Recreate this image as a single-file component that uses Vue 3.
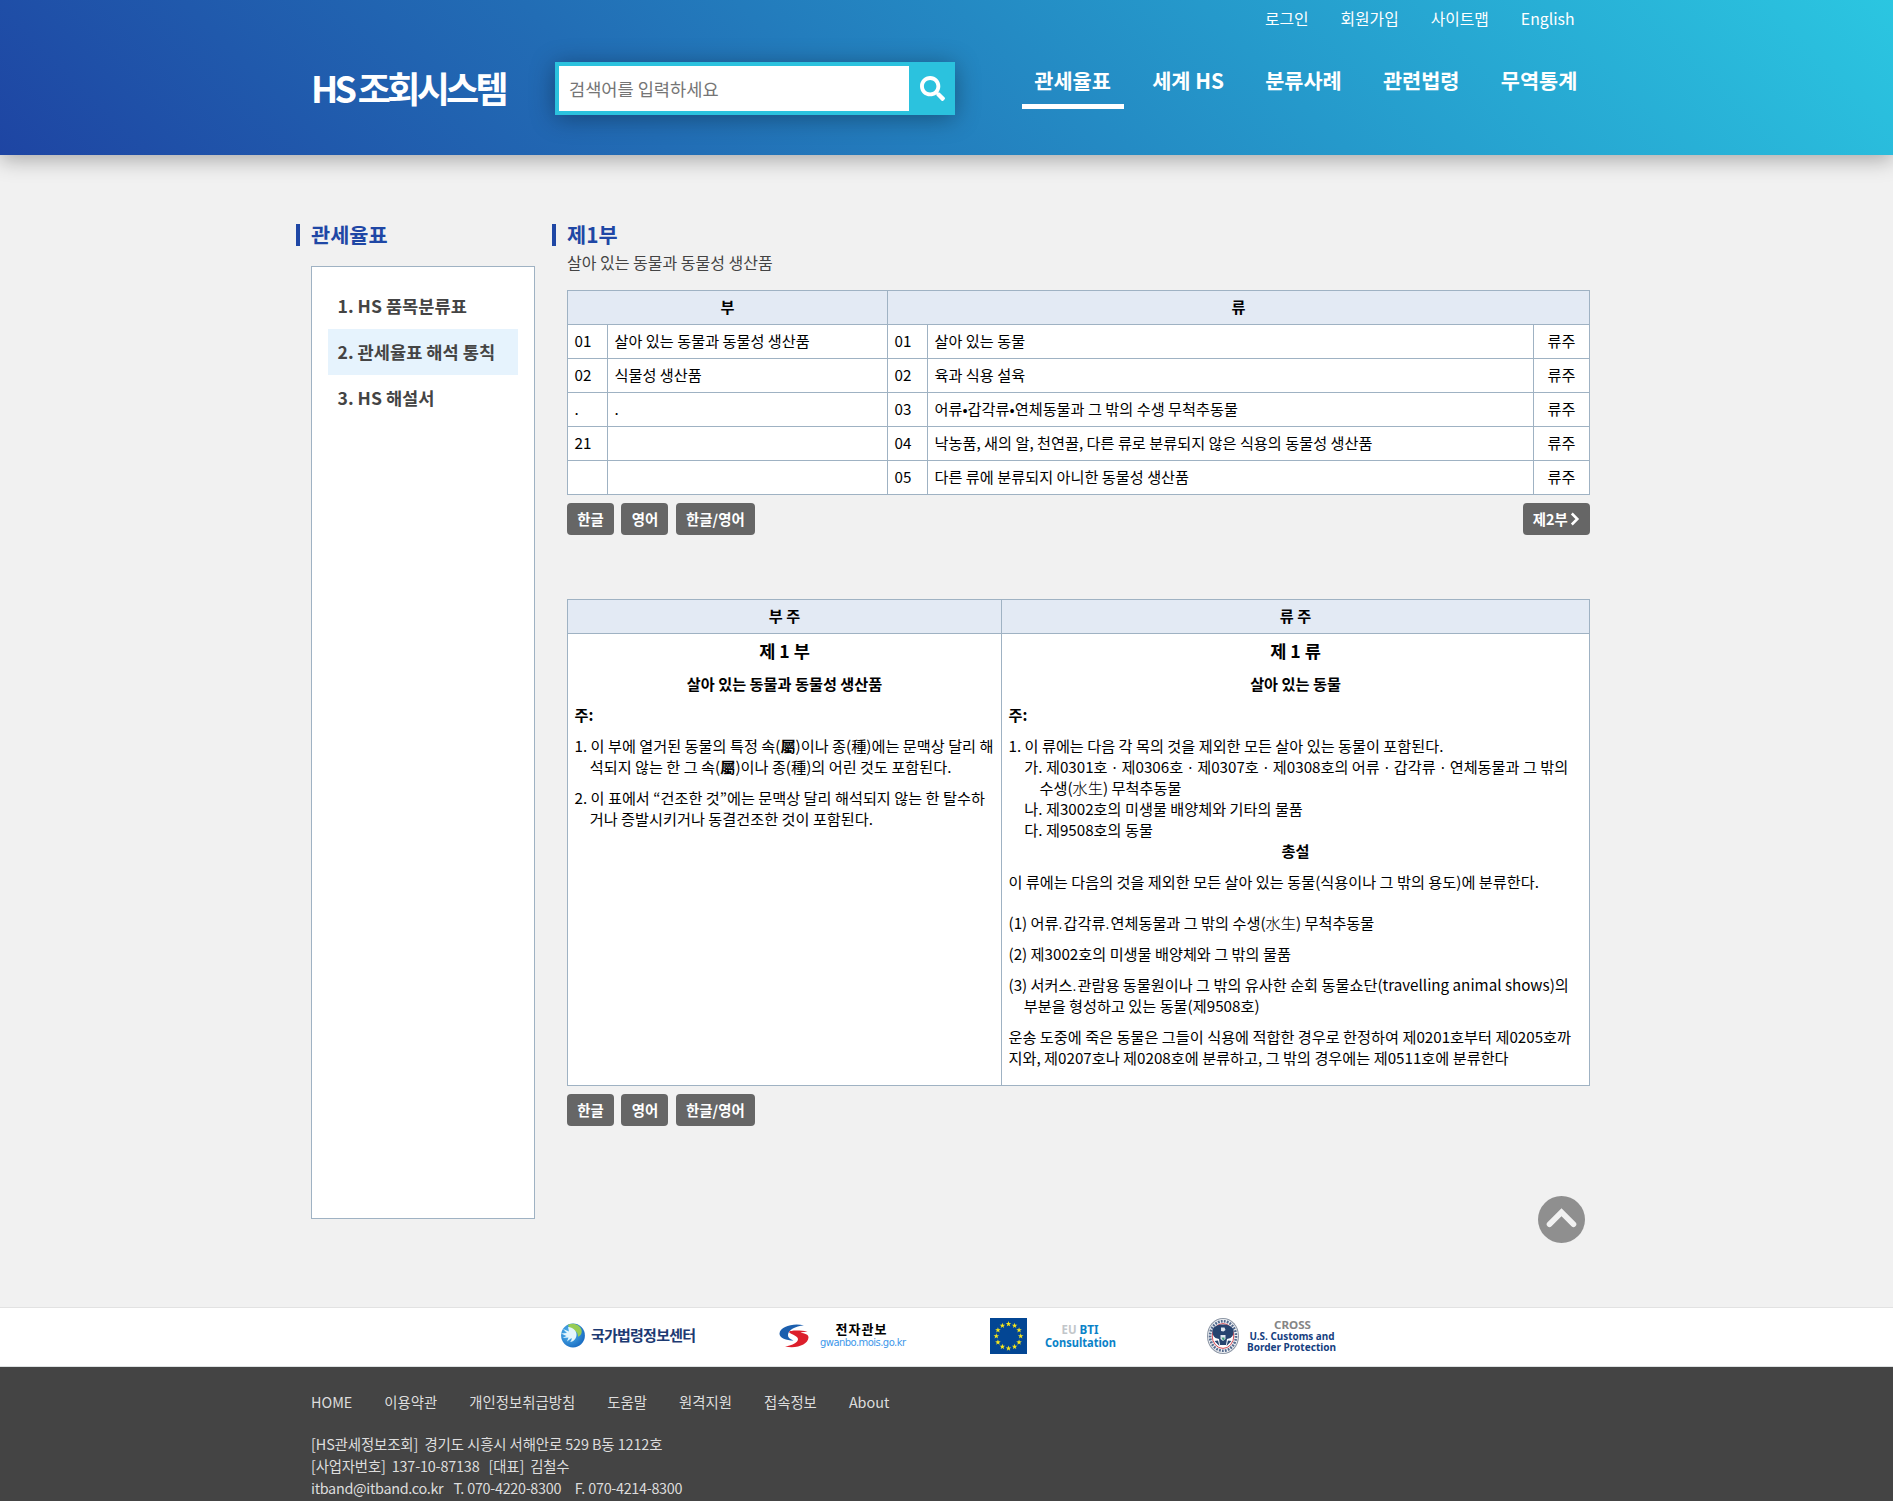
<script setup>
const topLinks = ['로그인', '회원가입', '사이트맵', 'English']
const mainNav = ['관세율표', '세계 HS', '분류사례', '관련법령', '무역통계']
const sideMenu = ['1. HS 품목분류표', '2. 관세율표 해석 통칙', '3. HS 해설서']
const rows = [
  ['01', '살아 있는 동물과 동물성 생산품', '01', '살아 있는 동물'],
  ['02', '식물성 생산품', '02', '육과 식용 설육'],
  ['.', '.', '03', '어류•갑각류•연체동물과 그 밖의 수생 무척추동물'],
  ['21', '', '04', '낙농품, 새의 알, 천연꿀, 다른 류로 분류되지 않은 식용의 동물성 생산품'],
  ['', '', '05', '다른 류에 분류되지 아니한 동물성 생산품'],
]
const languages = ['한글', '영어', '한글/영어']
const footerLinks = ['HOME', '이용약관', '개인정보취급방침', '도움말', '원격지원', '접속정보', 'About']

const starPoints = (cx, cy, r) =>
  Array.from({ length: 10 }, (_, i) => {
    const a = (i * Math.PI) / 5 - Math.PI / 2
    const q = i % 2 ? r * 0.4 : r
    return `${(cx + q * Math.cos(a)).toFixed(2)},${(cy + q * Math.sin(a)).toFixed(2)}`
  }).join(' ')
const stars = Array.from({ length: 12 }, (_, i) => {
  const a = (i * Math.PI) / 6
  return starPoints(23.5 + 12.2 * Math.sin(a), 25.2 - 12.2 * Math.cos(a), 2.9)
})
</script>

<template>
  <div class="page">
    <header class="header">
      <div class="header-inner">
        <a class="logo">HS 조회시스템</a>
        <form class="search">
          <input class="search-input" type="text" placeholder="검색어를 입력하세요" />
          <button class="search-button" type="button" aria-label="검색">
            <svg width="25" height="25" viewBox="0 0 512 512">
              <path fill="#fff" d="M505 442.700 405.300 343c-4.500-4.500-10.600-7-17-7H372c27.600-35.300 44-79.700 44-128C416 93.100 322.900 0 208 0S0 93.100 0 208s93.100 208 208 208c48.300 0 92.700-16.400 128-44v16.300c0 6.400 2.500 12.500 7 17l99.700 99.700c9.400 9.400 24.600 9.400 33.900 0l28.300-28.300c9.400-9.400 9.400-24.600.1-34zM208 336c-70.700 0-128-57.200-128-128 0-70.700 57.200-128 128-128 70.700 0 128 57.200 128 128 0 70.700-57.200 128-128 128z" />
            </svg>
          </button>
        </form>
        <div class="header-right">
          <nav class="top-links">
            <a v-for="link in topLinks" :key="link">{{ link }}</a>
          </nav>
          <nav class="main-nav">
            <a v-for="(item, i) in mainNav" :key="item" :class="{ active: i === 0 }">{{ item }}</a>
          </nav>
        </div>
      </div>
    </header>

    <div class="body">
      <aside class="side">
        <h2 class="title">관세율표</h2>
        <ul class="side-menu">
          <li v-for="(item, i) in sideMenu" :key="item" :class="{ current: i === 1 }">{{ item }}</li>
        </ul>
      </aside>

      <main class="main">
        <h2 class="title">제1부</h2>
        <p class="subtitle">살아 있는 동물과 동물성 생산품</p>

        <table class="grid index">
          <colgroup>
            <col class="c-no" /><col class="c-section" /><col class="c-no" /><col class="c-chapter" /><col class="c-note" />
          </colgroup>
          <thead>
            <tr><th colspan="2">부</th><th colspan="3">류</th></tr>
          </thead>
          <tbody>
            <tr v-for="(row, i) in rows" :key="i">
              <td v-for="(cell, j) in row" :key="j">{{ cell }}</td>
              <td class="center">류주</td>
            </tr>
          </tbody>
        </table>
        <div class="buttons">
          <button v-for="lang in languages" :key="lang" type="button">{{ lang }}</button>
          <button class="next" type="button">제2부<svg width="10" height="14" viewBox="0 0 10 14"><path d="M1.800 1.500 7.300 7 1.800 12.500" fill="none" stroke="#fff" stroke-width="2.600" /></svg></button>
        </div>

        <table class="grid notes">
          <colgroup><col class="n-left" /><col class="n-right" /></colgroup>
          <thead>
            <tr><th>부 주</th><th>류 주</th></tr>
          </thead>
          <tbody>
            <tr>
              <td>
                <h3>제 1 부</h3>
                <h4>살아 있는 동물과 동물성 생산품</h4>
                <p><b>주:</b></p>
                <p class="hang">1. 이 부에 열거된 동물의 특정 속(<b>屬</b>)이나 종(種)에는 문맥상 달리 해<br />석되지 않는 한 그 속(<b>屬</b>)이나 종(種)의 어린 것도 포함된다.</p>
                <p class="hang">2. 이 표에서 “건조한 것”에는 문맥상 달리 해석되지 않는 한 탈수하<br />거나 증발시키거나 동결건조한 것이 포함된다.</p>
              </td>
              <td>
                <h3>제 1 류</h3>
                <h4>살아 있는 동물</h4>
                <p><b>주:</b></p>
                <p class="tight">1. 이 류에는 다음 각 목의 것을 제외한 모든 살아 있는 동물이 포함된다.</p>
                <p class="tight sub">가. 제0301호ㆍ제0306호ㆍ제0307호ㆍ제0308호의 어류ㆍ갑각류ㆍ연체동물과 그 밖의<br />수생(<span class="thin">水生</span>) 무척추동물</p>
                <p class="tight sub">나. 제3002호의 미생물 배양체와 기타의 물품</p>
                <p class="tight sub">다. 제9508호의 동물</p>
                <h4>총설</h4>
                <p class="lead">이 류에는 다음의 것을 제외한 모든 살아 있는 동물(식용이나 그 밖의 용도)에 분류한다.</p>
                <p>(1) 어류<span class="thin dot">.</span>갑각류<span class="thin dot">.</span>연체동물과 그 밖의 수생(<span class="thin">水生</span>) 무척추동물</p>
                <p>(2) 제3002호의 미생물 배양체와 그 밖의 물품</p>
                <p class="hang">(3) 서커스<span class="thin dot">.</span>관람용 동물원이나 그 밖의 유사한 순회 동물쇼단(travelling animal shows)의<br />부분을 형성하고 있는 동물(제9508호)</p>
                <p>운송 도중에 죽은 동물은 그들이 식용에 적합한 경우로 한정하여 제0201호부터 제0205호까<br />지와, 제0207호나 제0208호에 분류하고, 그 밖의 경우에는 제0511호에 분류한다</p>
              </td>
            </tr>
          </tbody>
        </table>
        <div class="buttons">
          <button v-for="lang in languages" :key="lang" type="button">{{ lang }}</button>
        </div>

        <a class="to-top" aria-label="맨 위로">
          <svg width="47" height="47" viewBox="0 0 47 47">
            <circle cx="23.500" cy="23.500" r="23.500" fill="#8f8f8f" />
            <path d="M11.500 28.200 23.500 16.200 35.500 28.200" fill="none" stroke="#f1f1f1" stroke-width="5.600" stroke-linecap="round" stroke-linejoin="miter" />
          </svg>
        </a>
      </main>
    </div>

    <section class="partners">
      <svg width="146" height="49" viewBox="0 0 146 49">
        <defs>
          <radialGradient id="globe" cx="0.35" cy="0.4" r="0.7">
            <stop offset="0" stop-color="#56baf0" /><stop offset="1" stop-color="#1668c0" />
          </radialGradient>
        </defs>
        <circle cx="18" cy="24.500" r="11.900" fill="url(#globe)" />
        <path d="M13 13.800c5-2.500 12-.3 13.500 5 .8 3.500-.8 6-3.500 7 .3-4-2.500-7-8-6.500z" fill="#97cc55" />
        <path d="M6 22.500l6-.5-4-4 6 2.500-1-4.500c5 .5 8.500 3.500 8.500 7.500s-2.500 7-6.500 7.500c1.500-1.500 2-3 1.500-4l-4.500 3.500 1.500-4-6 .5 4-2z" fill="#e4f5fd" />
        <text x="36" y="30" font-size="15" font-weight="700" fill="#1d3a72" textLength="105">국가법령정보센터</text>
      </svg>
      <svg width="146" height="49" viewBox="0 0 146 49">
        <path d="M34 14.500C24 11.500 10 15.500 9.500 22.500c-.3 4.500 7 7 14 7-4-1.500-6-3.500-5.500-6 .7-4.500 7-8.500 16-9z" fill="#1b5fae" />
        <path d="M37.500 20.500c-7-1.500-18-1.500-18.500.5-.3 1.500 9 3.500 9 7 0 3.500-5 6-13 7.500 12 2.500 23-2 23.500-9 .3-3-4-4.200-8-4.700 2-.8 4.500-1.200 7-1.300z" fill="#dc1f2b" />
        <text x="65.500" y="22.500" font-size="13" font-weight="700" fill="#000" textLength="51">전자관보</text>
        <text x="50" y="35" class="latin" font-size="10" fill="#3d97ea" textLength="86">gwanbo.mois.go.kr</text>
      </svg>
      <svg width="146" height="49" viewBox="0 0 146 49">
        <rect x="5" y="7" width="37" height="36" fill="#034694" />
        <polygon v-for="(s, i) in stars" :key="i" :points="s" fill="#f8e71c" />
        <text x="76.500" y="23" class="latin-bold" font-size="11.500" fill="#c2c6ca" textLength="15" lengthAdjust="spacingAndGlyphs">EU</text>
        <text x="94.500" y="23" class="latin-bold" font-size="11.500" fill="#0a82c8" textLength="19" lengthAdjust="spacingAndGlyphs">BTI</text>
        <text x="60" y="36" class="latin-bold" font-size="11.500" fill="#0a82c8" textLength="71" lengthAdjust="spacingAndGlyphs">Consultation</text>
      </svg>
      <svg width="160" height="49" viewBox="0 0 160 49">
        <ellipse cx="23" cy="25" rx="16" ry="18" fill="#8b95a4" />
        <ellipse cx="23" cy="25" rx="15" ry="17" fill="#eef0f3" />
        <ellipse cx="23" cy="25" rx="13" ry="14.800" fill="none" stroke="#536a8e" stroke-width="2.600" stroke-dasharray="1.800 1.200" />
        <ellipse cx="23" cy="25" rx="10.800" ry="12.400" fill="#fff" stroke="#d33a45" stroke-width="0.900" />
        <path d="M12.500 18.500c2-3.500 5-5 10.500-5s8.500 1.500 10.500 5c.5 4-.5 7-3 8.500l-3.500 1-1 6h-6l-1-6-3.500-1c-2.500-1.500-3.500-4.500-3-8.500z" fill="#27446f" />
        <path d="M14.500 30l3.500-.5 1.500 5.500zM31.500 30l-3.500-.5-1.500 5.500z" fill="#27446f" />
        <path d="M21 16.500h3.500l1 2.500-2 1.500-2.500-.5zM20.500 24h5v4l-2.500 2-2.500-2z" fill="#dfe6ee" />
        <path d="M21.500 26.500h3v2l-1.500 1z" fill="#3f9d7d" />
        <text x="74" y="17.500" class="latin-bold" font-size="11" fill="#858585" textLength="37" lengthAdjust="spacingAndGlyphs">CROSS</text>
        <text x="49.500" y="29.200" class="latin-bold" font-size="10" fill="#15407f" textLength="85" lengthAdjust="spacingAndGlyphs">U.S. Customs and</text>
        <text x="47" y="40.200" class="latin-bold" font-size="10" fill="#15407f" textLength="89" lengthAdjust="spacingAndGlyphs">Border Protection</text>
      </svg>
    </section>

    <footer class="footer">
      <nav class="footer-links">
        <a v-for="link in footerLinks" :key="link">{{ link }}</a>
      </nav>
      <address>
        [HS관세정보조회]&nbsp; 경기도 시흥시 서해안로 529 B동 1212호<br />
        <span class="registration">[사업자번호]&nbsp; 137-10-87138 &nbsp; [대표]&nbsp; 김철수</span><br />
        <span class="contact">itband@itband.co.kr &nbsp; T. 070-4220-8300 &nbsp;&nbsp; F. 070-4214-8300</span>
      </address>
    </footer>
  </div>
</template>

<style>
html,
body {
  margin: 0;
  background: #f1f1f1;
  overflow: hidden;
}
</style>

<style scoped>
.page {
  height: 1501px;
  overflow: hidden;
  display: flex;
  flex-direction: column;
  font-family: "Noto Sans CJK KR", "Noto Sans", sans-serif;
  color: #000;
  background: #f1f1f1;
  box-sizing: border-box;
}
.page * {
  box-sizing: border-box;
}
h2, h3, h4, p, ul {
  margin: 0;
  padding: 0;
}
.header {
  flex: none;
  position: relative;
  height: 155px;
  background: linear-gradient(45deg, #1e45a3 0%, #226db5 33%, #2599cb 66%, #2bc6e1 100%);
  box-shadow: 0 5px 20px rgba(0, 0, 0, 0.3);
}
.header-inner {
  width: 1279px;
  height: 155px;
  margin-left: 311px;
  display: flex;
  align-items: flex-start;
}
.logo {
  width: 244px;
  margin-top: 61px;
  line-height: 53px;
  font-size: 36px;
  font-weight: 700;
  letter-spacing: -3.7px;
  color: #fff;
  white-space: nowrap;
}
.search {
  width: 400px;
  height: 53px;
  margin-top: 62px;
  padding: 4px;
  display: flex;
  background: #2bc2de;
  box-shadow: 0 3px 24px rgba(0, 0, 0, 0.35);
}
.search-input {
  width: 350px;
  height: 45px;
  padding: 0 10px;
  border: 0;
  background: #fff;
  font: 17.6px "Noto Sans CJK KR", sans-serif;
}
.search-input::placeholder {
  color: #757575;
}
.search-button {
  flex: 1;
  padding: 0 0 0 5px;
  border: 0;
  background: none;
  display: flex;
  align-items: center;
  justify-content: center;
}
.header-right {
  flex: 1;
  display: flex;
  flex-direction: column;
  align-items: flex-end;
  color: #fff;
}
.top-links {
  display: flex;
  gap: 32px;
  margin-right: 15.5px;
  margin-top: 7px;
  height: 24px;
  line-height: 24px;
  font-size: 15.8px;
}
.main-nav {
  display: flex;
  gap: 15.9px;
  margin-top: 34px;
  font-size: 20.8px;
  font-weight: 700;
}
.main-nav a {
  height: 44px;
  padding: 0 12.7px;
  line-height: 31px;
  border-bottom: 5px solid transparent;
}
.main-nav .active {
  border-bottom-color: #fff;
}
.body {
  flex: none;
  display: flex;
  height: 1152px;
  padding: 66px 0 0 311px;
}
.title {
  position: relative;
  height: 28px;
  line-height: 26px;
  font-size: 20.8px;
  font-weight: 700;
  color: #1f47a5;
}
.title::before {
  content: "";
  position: absolute;
  left: -15px;
  top: 3px;
  width: 4px;
  height: 22px;
  background: #1f47a5;
}
.side {
  width: 224px;
  margin-right: 32px;
}
.side-menu {
  height: 953px;
  margin-top: 17px;
  padding: 16px;
  list-style: none;
  background: #fff;
  border: 1px solid #9fb2c3;
}
.side-menu li {
  height: 46px;
  padding-left: 9.5px;
  line-height: 45px;
  font-size: 17.6px;
  font-weight: 700;
  color: #444;
  white-space: nowrap;
}
.side-menu .current {
  background: #e6f3fd;
}
.main {
  position: relative;
  width: 1023px;
}
.subtitle {
  height: 24px;
  line-height: 24px;
  margin-top: 1px;
  font-size: 16px;
  color: #444;
}
.grid {
  width: 1023px;
  table-layout: fixed;
  border-collapse: collapse;
  background: #fff;
  font-size: 15.2px;
  line-height: 21px;
}
.index {
  margin-top: 16px;
}
.grid th,
.grid td {
  height: 34px;
  padding: 0 6.5px 2px;
  border: 1px solid #9fb2c3;
  text-align: left;
  white-space: nowrap;
}
.grid th {
  background: #e3eaf4;
  font-weight: 700;
  text-align: center;
}
.grid td.center {
  text-align: center;
}
.c-no { width: 40px; }
.c-section { width: 280px; }
.c-chapter { width: 606px; }
.c-note { width: 56px; }
.n-left { width: 434px; }
.n-right { width: 588px; }
.buttons {
  display: flex;
  gap: 7.6px;
  margin-top: 8px;
  height: 32px;
}
.buttons button {
  padding: 0 10.2px;
  border: 0;
  border-radius: 4px;
  background: #666;
  color: #fff;
  font: 700 14.4px/32px "Noto Sans CJK KR", sans-serif;
}
.buttons .next {
  display: flex;
  align-items: center;
  gap: 2px;
  margin-left: auto;
}
.notes {
  margin-top: 64px;
}
.grid.notes td {
  height: 452px;
  padding: 4px 6.5px;
  vertical-align: top;
}
.notes h3 {
  margin-bottom: 10px;
  line-height: 25px;
  font-size: 17.6px;
  font-weight: 700;
  text-align: center;
}
.notes h4 {
  margin-bottom: 10px;
  font-size: 15.2px;
  font-weight: 700;
  text-align: center;
}
.notes b {
  font-weight: 700;
}
.notes p {
  margin-bottom: 10px;
}
.notes .tight {
  margin-bottom: 0;
}
.notes .lead {
  margin-bottom: 20px;
}
.notes .hang {
  padding-left: 15.2px;
  text-indent: -15.2px;
}
.notes .sub {
  padding-left: 31px;
  text-indent: -15.2px;
}
.thin {
  font-weight: 300;
}
.dot {
  letter-spacing: 1.2px;
}
.to-top {
  position: absolute;
  right: 5px;
  top: 975px;
  height: 47px;
}
.to-top svg {
  display: block;
}
.partners {
  flex: none;
  display: flex;
  gap: 69px;
  height: 60px;
  padding: 3px 0 0 555px;
  background: #fff;
  border-top: 1px solid #e2e2e2;
  border-bottom: 1px solid #dde1e2;
}
.latin {
  font-family: "DejaVu Sans", sans-serif;
}
.latin-bold {
  font-family: "Noto Sans", sans-serif;
  font-weight: 700;
}
.footer {
  flex: none;
  height: 160px;
  padding: 24px 0 0 311px;
  background: #444;
  color: #ddd;
  font-size: 14.4px;
}
.footer-links {
  display: flex;
  gap: 32px;
  height: 22px;
  line-height: 22px;
}
address {
  margin-top: 20px;
  line-height: 22px;
  font-style: normal;
  letter-spacing: -0.1px;
}
.registration {
  letter-spacing: -0.18px;
}
.contact {
  letter-spacing: -0.31px;
  word-spacing: 0.5px;
}
</style>
